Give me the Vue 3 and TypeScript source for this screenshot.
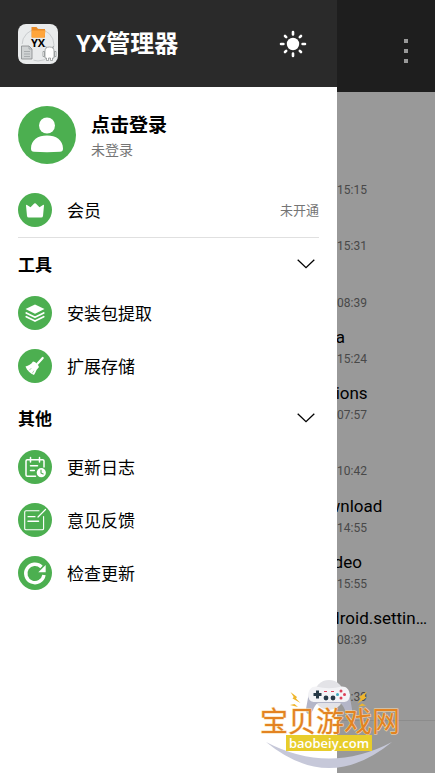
<script setup lang="ts">
import { ref } from 'vue'

interface FileRow {
  name: string
  time: string
}
interface MenuItem {
  icon: string
  label: string
}
interface MenuSection {
  title: string
  items: MenuItem[]
}

const files: FileRow[] = [
  { name: 'Alarms', time: '2023-12-14 15:15' },
  { name: 'Android', time: '2023-12-14 15:31' },
  { name: 'backup', time: '2023-12-14 08:39' },
  { name: 'YY Media', time: '2023-12-14 15:24' },
  { name: 'Applications', time: '2023-12-14 07:57' },
  { name: 'DCIM', time: '2023-12-14 10:42' },
  { name: 'ByteDownload', time: '2023-12-14 14:55' },
  { name: 'Short Video', time: '2023-12-14 15:55' },
  { name: 'com.android.settings.data', time: '2023-12-14 08:39' },
  { name: 'Music', time: '2023-12-14 08:39' },
]

const sections: MenuSection[] = [
  {
    title: '工具',
    items: [
      { icon: 'layers', label: '安装包提取' },
      { icon: 'broom', label: '扩展存储' },
    ],
  },
  {
    title: '其他',
    items: [
      { icon: 'calendar', label: '更新日志' },
      { icon: 'note', label: '意见反馈' },
      { icon: 'refresh', label: '检查更新' },
    ],
  },
]

const closed = ref<Record<string, boolean>>({})
function toggle(title: string) {
  closed.value[title] = !closed.value[title]
}
</script>

<template>
  <div class="screen">
    <main class="files">
      <header class="topbar">
        <button class="more" type="button" aria-label="更多">
          <svg width="6" height="26" viewBox="0 0 6 26" fill="#999">
            <rect x="1" y="1" width="4" height="4" />
            <rect x="1" y="11" width="4" height="4" />
            <rect x="1" y="21" width="4" height="4" />
          </svg>
        </button>
      </header>
      <ul class="list">
        <li v-for="(file, i) in files" :key="i" class="file">
          <span class="name">{{ file.name }}</span>
          <time class="time">{{ file.time }}</time>
        </li>
      </ul>
      <footer class="bottombar"></footer>
    </main>

    <aside class="drawer">
      <header class="brand">
        <svg class="logo" viewBox="0 0 40 40">
          <rect width="40" height="40" rx="8" fill="#e9ebec" />
          <circle cx="20" cy="21" r="16" fill="none" stroke="#c9ccce" stroke-width="1" />
          <path d="M13.5 3h5l1.5 2h7v8.500h-13.500z" fill="#e88a26" />
          <path d="M14 6.500h13.500l-1 7h-12.500z" fill="#ffa53c" />
          <rect x="1.500" y="20" width="14" height="17" fill="#e9ebec" />
          <path d="M3.500 22h7.500l3 3v10h-10.500z" fill="#d0d3d4" stroke="#85898b" stroke-width=".8" />
          <path d="M11 22v3h3M6 27.500h6M6 30h6M6 32.500h6" fill="none" stroke="#979b9d" stroke-width=".7" />
          <path d="M27 27q0-4 4.500-4t4.500 4v7h-1.500v2.500h-2v-2.500h-2v2.500h-2v-2.500h-1.500zM25 27.500h1.500v5h-1.500zM36.500 27.500h1.500v5h-1.500z" fill="#fff" stroke="#85898b" stroke-width=".7" />
          <path d="M28.500 24l-1-2M34.500 24l1-2" stroke="#85898b" stroke-width=".7" />
          <text class="logo-text" x="20" y="23" text-anchor="middle">YX</text>
        </svg>
        <h1 class="title">YX管理器</h1>
        <button class="theme" type="button" aria-label="切换主题">
          <svg width="28" height="28" viewBox="0 0 28 28">
            <circle cx="14" cy="14" r="6.200" fill="#fff" />
            <path d="M14 2v2.400M14 23.600v2.400M2 14h2.400M23.600 14h2.400M6 6l1.200 1.200M20.800 20.800l1.200 1.200M22 6l-1.200 1.200M7.200 20.800l-1.200 1.200" stroke="#fff" stroke-width="2.600" stroke-linecap="round" />
          </svg>
        </button>
      </header>

      <button class="profile" type="button">
        <svg class="avatar" viewBox="0 0 58 58">
          <circle cx="29" cy="29" r="29" fill="#4caf50" />
          <circle cx="29" cy="19.500" r="8" fill="#fff" />
          <path d="M13 42.500C13 34 20 29.500 29 29.500s16 4.500 16 13q0 3.200-3 3.200c-8 .6-18 .6-26 0q-3 0-3-3.200z" fill="#fff" />
        </svg>
        <span class="who">
          <strong class="login">点击登录</strong>
          <span class="state">未登录</span>
        </span>
      </button>

      <button class="item member" type="button">
        <svg class="icon" viewBox="0 0 34 34">
          <circle cx="17" cy="17" r="17" fill="#4caf50" />
          <path d="M8 12.500q0-1 1-.5l3.500 2.300 3.700-3.800q.8-.7 1.600 0l3.700 3.800 3.500-2.300q1-.5 1 .5l-1 10.500q-.2 1.600-1.800 1.600h-12.400q-1.600 0-1.800-1.600z" fill="#fff" />
        </svg>
        <span class="label">会员</span>
        <span class="status">未开通</span>
      </button>

      <section v-for="section in sections" :key="section.title">
        <h2 class="heading">
          <button class="toggle" type="button" :aria-expanded="!closed[section.title]" @click="toggle(section.title)">
            <span>{{ section.title }}</span>
            <svg width="18" height="10" viewBox="0 0 18 10" fill="none" stroke="#000" stroke-width="1.300">
              <path d="M.7.700l8.300 8 8.300-8" />
            </svg>
          </button>
        </h2>
        <template v-if="!closed[section.title]">
          <button v-for="item in section.items" :key="item.label" class="item" type="button">
            <svg class="icon" viewBox="0 0 34 34" fill="none" stroke-linecap="round" stroke-linejoin="round">
              <circle cx="17" cy="17" r="17" fill="#4caf50" />
              <template v-if="item.icon === 'layers'">
                <path d="M17 8.500l9.500 4.500-9.500 4.700-9.500-4.700z" fill="#fff" />
                <path d="M8.300 17l8.700 4.300 8.700-4.300M8.300 20.700l8.700 4.300 8.700-4.300" stroke="#fff" stroke-width="1.800" />
              </template>
              <template v-else-if="item.icon === 'broom'">
                <path d="M24.700 9l-5.200 5.800" stroke="#fff" stroke-width="2.200" />
                <path d="M15 12.500q4 .5 6 5.500l-2.500 3c-.6 1.800-1.500 3.500-2.500 5-3.500-1.300-7-4.300-8.500-8.500 3-.8 5.500-2 7.500-5z" fill="#fff" />
                <path d="M11.500 21l1.500-1.500M14.500 24l1.300-2" stroke="#4caf50" stroke-width=".5" />
              </template>
              <template v-else-if="item.icon === 'calendar'">
                <path d="M17.500 26.200h-8.300q-1.200 0-1.200-1.200v-14q0-1.200 1.200-1.200h15.600q1.200 0 1.200 1.200v6" stroke="#fff" stroke-width="1.500" />
                <path d="M12.500 7.500v4.500M21.500 7.500v4.500M12.500 15.800h7M12.500 20.500h3.800" stroke="#fff" stroke-width="1.500" />
                <circle cx="23.300" cy="22.700" r="4.600" fill="#fff" />
                <path d="M23 20v3l2.200 1" stroke="#4caf50" stroke-width="1.100" />
              </template>
              <template v-else-if="item.icon === 'note'">
                <path d="M21 7.700h-13q-1.300 0-1.300 1.300v16.500q0 1.300 1.300 1.300h16.300q1.300 0 1.300-1.300v-12" stroke="#fff" stroke-width="1.100" />
                <path d="M27.500 6.500l-7.500 7.500M10 13.700h7" stroke="#fff" stroke-width="1.200" />
                <path d="M10 18.200h10.500" stroke="#fff" stroke-width="1.500" />
              </template>
              <template v-else>
                <path d="M23.500 11a9.200 9.200 0 1 0 2.500 8" stroke="#fff" stroke-width="3.400" stroke-linecap="butt" />
                <path d="M27.700 9v7.200h-7.400z" fill="#fff" />
              </template>
            </svg>
            <span class="label">{{ item.label }}</span>
          </button>
        </template>
      </section>
    </aside>

    <svg class="badge" viewBox="0 0 142 94" role="img" aria-label="宝贝游戏网">
      <circle cx="69" cy="17" r="15" fill="#e3e3e7" />
      <path d="M6 64Q69 116 132 64Q69 97 6 64z" fill="#c6c8d9" />
      <path d="M56 9c9 3 17 3 26 0c6 0 7 5 8 10l2 11q.5 5-3 5c-4 0-4-8-9-11h-22c-5 3-5 11-9 11q-3.500 0-3-5l2-11c1-5 2-10 8-10z" transform="translate(0 1)" fill="#b4b6c8" />
      <path d="M56 8.500q13 3.500 26 0c5 0 7 3 8 8q0 6.500-5.500 7.500h-31q-5.500-1-5.500-7.500c1-5 3-8 8-8z" fill="#f3f3f6" />
      <path d="M57.500 12.500v8M53.500 16.500h8" stroke="#273947" stroke-width="3" />
      <g fill="#dc4057">
        <circle cx="81" cy="13" r="1.500" /><circle cx="81" cy="20" r="1.500" /><circle cx="84.500" cy="16.500" r="1.500" />
        <path d="M64 13h3v1h-3zM71 13h3v1h-3z" />
      </g>
      <circle cx="77.500" cy="16.500" r="1.500" fill="#3fa9bd" />
      <g fill="#273947"><circle cx="66" cy="20" r="2.400" /><circle cx="73" cy="20" r="2.400" /></g>
      <path d="M30.500 14l6.500 5-1 1.500 4.500 4.500-8-4.500 1.200-1.500zM30 27l8 2-3.500-3zM107 13.500l-8 5.500 2 1.500-3.500 5 9-6-2-1.500zM98 28.500l8-1-4-2z" fill="#efb62c" />
      <text class="badge-title" x="0" y="54">宝贝游戏网</text>
      <rect x="26" y="57" width="86" height="16" fill="#e8cd2b" />
      <text class="badge-url" x="69" y="70" text-anchor="middle">baobeiy.com</text>
    </svg>
  </div>
</template>

<style>
body {
  margin: 0;
}
</style>

<style scoped>
.screen {
  position: relative;
  display: flex;
  min-height: 100vh;
  overflow: hidden;
  font-family: Roboto, "Noto Sans CJK SC", sans-serif;
  color: #000;
}
button {
  border: 0;
  padding: 0;
  background: none;
  font: inherit;
  color: inherit;
  text-align: left;
  cursor: pointer;
}
svg {
  display: block;
  flex: none;
}
.files {
  flex: 1;
  min-width: 0;
  display: flex;
  flex-direction: column;
  background: #999;
}
.topbar {
  display: flex;
  align-items: center;
  justify-content: flex-end;
  height: 92px;
  padding: 10px 26px 0 0;
  box-sizing: border-box;
  background: #1e1e1e;
}
.list {
  flex: 1;
  display: grid;
  grid-auto-rows: 1fr;
  margin: 65px 0 0;
  padding: 0 6px 0 calc(50% + 56px);
  list-style: none;
}
.file {
  display: flex;
  flex-direction: column;
  min-width: 0;
}
.name {
  overflow: hidden;
  text-overflow: ellipsis;
  white-space: nowrap;
  font-size: 17px;
  line-height: 22px;
}
.time {
  font-size: 12px;
  line-height: 22px;
  color: #484848;
}
.bottombar {
  height: 53px;
  box-sizing: border-box;
  border-top: 1px solid #8c8c8c;
}
.drawer {
  position: absolute;
  top: 0;
  bottom: 0;
  left: 0;
  width: 77.5%;
  background: #fff;
  font-family: "Noto Sans CJK SC", sans-serif;
}
.brand {
  display: flex;
  align-items: center;
  height: 87px;
  padding: 0 30px 0 18px;
  box-sizing: border-box;
  background: #2a2a2a;
  color: #fff;
}
.logo {
  width: 40px;
  height: 40px;
}
.logo-text {
  font: bold 11px "Open Sans", sans-serif;
}
.title {
  flex: 1;
  margin: 0 0 0 18px;
  font-family: Roboto, "Noto Sans CJK SC", sans-serif;
  font-size: 24px;
  line-height: 34px;
  font-weight: 700;
}
.profile {
  display: flex;
  align-items: center;
  gap: 15px;
  width: 100%;
  padding: 19px 18px;
}
.avatar {
  width: 58px;
  height: 58px;
}
.who {
  display: flex;
  flex-direction: column;
}
.login {
  font-size: 19px;
  line-height: 28px;
}
.state {
  font-size: 14px;
  line-height: 22px;
  color: #757575;
}
.item {
  display: flex;
  align-items: center;
  gap: 15px;
  width: 100%;
  height: 53px;
  padding: 0 18px;
}
.member {
  width: calc(100% - 36px);
  height: 55px;
  margin: 0 18px;
  padding: 0;
  border-bottom: 1px solid #e0e0e0;
}
.icon {
  width: 34px;
  height: 34px;
}
.label {
  flex: 1;
  font-size: 17px;
  line-height: 24px;
}
.status {
  font-size: 13px;
  line-height: 20px;
  color: #757575;
}
.heading {
  margin: 0;
  padding: 13px 22px 9px 18px;
  font-size: 17px;
  line-height: 26px;
}
.toggle {
  display: flex;
  align-items: center;
  justify-content: space-between;
  width: 100%;
}
.badge {
  position: absolute;
  right: 33px;
  bottom: 1px;
  width: 142px;
  height: 94px;
}
.badge-title {
  font: 28px "Noto Sans CJK SC", sans-serif;
  fill: #e38321;
  stroke: #f8dcae;
  stroke-width: 1px;
  paint-order: stroke;
}
.badge-url {
  font: 600 13px "Open Sans", sans-serif;
  fill: #fff;
}
</style>
